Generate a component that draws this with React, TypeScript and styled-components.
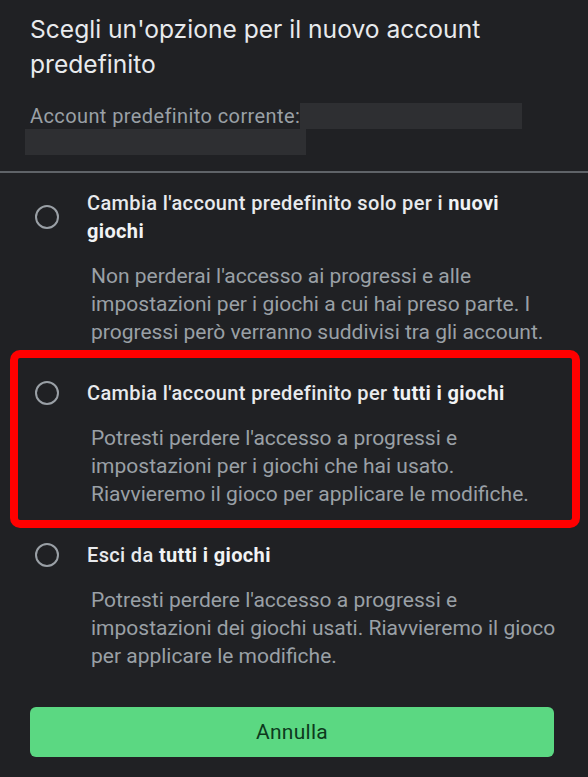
import styled, { createGlobalStyle } from 'styled-components';

const Global = createGlobalStyle`
    html, body {
        margin: 0;
        background: #202124;
    }
`;

const Sheet = styled.div`
    width: 588px;
    min-height: 777px;
    background: #202124;
    font-family: Roboto, "Noto Sans", sans-serif;
    box-sizing: border-box;
    padding-top: 12px;
`;

const Header = styled.div`
    padding: 0 30px;
`;

const Title = styled.h1`
    margin: 0;
    font-family: Inter, Roboto, sans-serif;
    font-weight: 400;
    font-size: 24.6px;
    line-height: 35px;
    color: #e8eaed;
`;

const Current = styled.p`
    margin: 21px 0 0;
    font-size: 20px;
    line-height: 26px;
    color: #9aa0a6;
    letter-spacing: 0.4px;
`;

const Redacted = styled.span<{ $w: number; $shift?: number }>`
    display: inline-block;
    vertical-align: top;
    width: ${p => p.$w}px;
    height: 26px;
    background: #2e2f32;
    margin-left: ${p => p.$shift ?? 0}px;
`;

const Divider = styled.hr`
    margin: 16px 0 0;
    border: none;
    height: 2px;
    background: #5f6368;
`;

const Option = styled.div<{ $marked?: boolean }>`
    position: relative;
    padding: 16px 22px 17px 35px;

    &::after {
        content: '';
        display: ${p => (p.$marked ? 'block' : 'none')};
        position: absolute;
        top: -13px;
        bottom: -3px;
        left: 10px;
        right: 8px;
        border: 8px solid #ff0000;
        border-radius: 10px;
        pointer-events: none;
    }
`;

const Head = styled.div`
    display: flex;
    align-items: center;
`;

const Radio = styled.span`
    flex: none;
    width: 24px;
    height: 24px;
    border-radius: 50%;
    border: 2px solid #9aa0a6;
    box-sizing: border-box;
    margin-right: 28px;
`;

const Label = styled.div`
    padding-right: 20px;
    font-size: 20px;
    line-height: 28px;
    font-weight: 500;
    letter-spacing: 0.35px;
    color: #e8eaed;

    b {
        font-weight: 700;
        color: #f1f3f4;
    }
`;

const Desc = styled.p`
    margin: 17px 0 0 4px;
    padding-left: 52px;
    font-size: 21px;
    line-height: 28px;
    color: #9aa0a6;
    letter-spacing: 0;
`;

const Cancel = styled.button`
    display: block;
    margin: 20px 34px 0 30px;
    width: 524px;
    height: 50px;
    border: none;
    border-radius: 6px;
    background: #5bd882;
    color: #0d3a1d;
    font-family: Roboto, sans-serif;
    font-size: 21px;
    font-weight: 400;
    letter-spacing: 0.3px;
`;

const options = [
    {
        label: <>Cambia l'account predefinito solo per i <b>nuovi giochi</b></>,
        desc: "Non perderai l'accesso ai progressi e alle impostazioni per i giochi a cui hai preso parte. I progressi però verranno suddivisi tra gli account.",
    },
    {
        label: <>Cambia l'account predefinito per <b>tutti i giochi</b></>,
        desc: "Potresti perdere l'accesso a progressi e impostazioni per i giochi che hai usato. Riavvieremo il gioco per applicare le modifiche.",
        marked: true,
    },
    {
        label: <>Esci da <b>tutti i giochi</b></>,
        desc: "Potresti perdere l'accesso a progressi e impostazioni dei giochi usati. Riavvieremo il gioco per applicare le modifiche.",
    },
];

function App() {
    return (
        <>
            <Global />
            <Sheet>
                <Header>
                    <Title>Scegli un'opzione per il nuovo account predefinito</Title>
                    <Current>
                        Account predefinito corrente:<Redacted $w={222} />
                        <br />
                        <Redacted $w={281} $shift={-5} />
                    </Current>
                </Header>
                <Divider />
                {options.map((o, i) => (
                    <Option key={i} $marked={o.marked}>
                        <Head>
                            <Radio />
                            <Label>{o.label}</Label>
                        </Head>
                        <Desc>{o.desc}</Desc>
                    </Option>
                ))}
                <Cancel>Annulla</Cancel>
            </Sheet>
        </>
    );
}

export default App;
